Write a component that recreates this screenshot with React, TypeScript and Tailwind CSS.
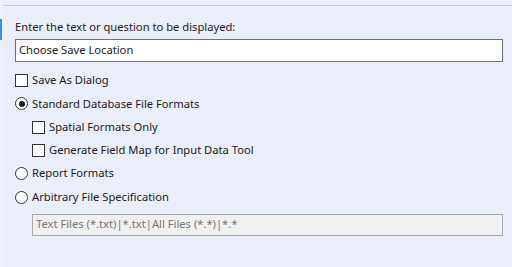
import React from 'react';

const font = { fontFamily: '"Noto Sans", "Open Sans", sans-serif' };

function Check({ label, indent }: { label: string; indent?: boolean }) {
  return (
    <div className={`flex h-[23.3px] items-center ${indent ? 'pl-[17px]' : ''}`}>
      <span className="h-[13px] w-[13px] shrink-0 border border-[#333333] bg-white" />
      <span className="ml-[4px] text-[11.2px] text-[#1b1b1b]">{label}</span>
    </div>
  );
}

function Radio({ label, checked }: { label: string; checked?: boolean }) {
  return (
    <div className="flex h-[23.3px] items-center">
      <span className="flex h-[13px] w-[13px] shrink-0 items-center justify-center rounded-full border border-[#333333] bg-white">
        {checked && <span className="h-[6px] w-[6px] rounded-full bg-[#1b1b1b]" />}
      </span>
      <span className="ml-[4px] text-[11.2px] text-[#1b1b1b]">{label}</span>
    </div>
  );
}

export default function App() {
  return (
    <div className="flex h-[267px] w-[512px] overflow-hidden bg-[#eaeef9]" style={font}>
      <div className="w-[3px] shrink-0 bg-[#eef1f9] pt-[19px]">
        <div className="h-[21px] w-[2px] bg-[#3c8dea]" />
      </div>
      <div className="flex flex-1 flex-col">
        <div className="h-[5px] shrink-0" />
        <div className="h-[1px] shrink-0 bg-[#c3c6cf]" />
        <div className="h-[1px] shrink-0 bg-[#f2f5fc]" />
        <div className="flex flex-col pl-[12px] pr-[9px]">
          <div className="mt-[12px] flex h-[16px] items-center text-[11.2px] text-[#1b1b1b]">
            Enter the text or question to be displayed:
          </div>
          <div className="mt-[4px] flex h-[23px] items-center border border-[#6f6f6f] bg-white pl-[3px] text-[11.2px] text-[#1b1b1b]">
            Choose Save Location
          </div>
          <div className="mt-[7px] flex flex-col">
            <Check label="Save As Dialog" />
            <Radio label="Standard Database File Formats" checked />
            <Check label="Spatial Formats Only" indent />
            <Check label="Generate Field Map for Input Data Tool" indent />
            <Radio label="Report Formats" />
            <Radio label="Arbitrary File Specification" />
          </div>
          <div className="ml-[17px] mt-[5px] flex h-[22px] items-center border border-[#a9acae] bg-[#f0f0f0] pl-[3px] text-[11.2px] text-[#777777]">
            Text Files (*.txt)|*.txt|All Files (*.*)|*.*
          </div>
        </div>
      </div>
    </div>
  );
}
